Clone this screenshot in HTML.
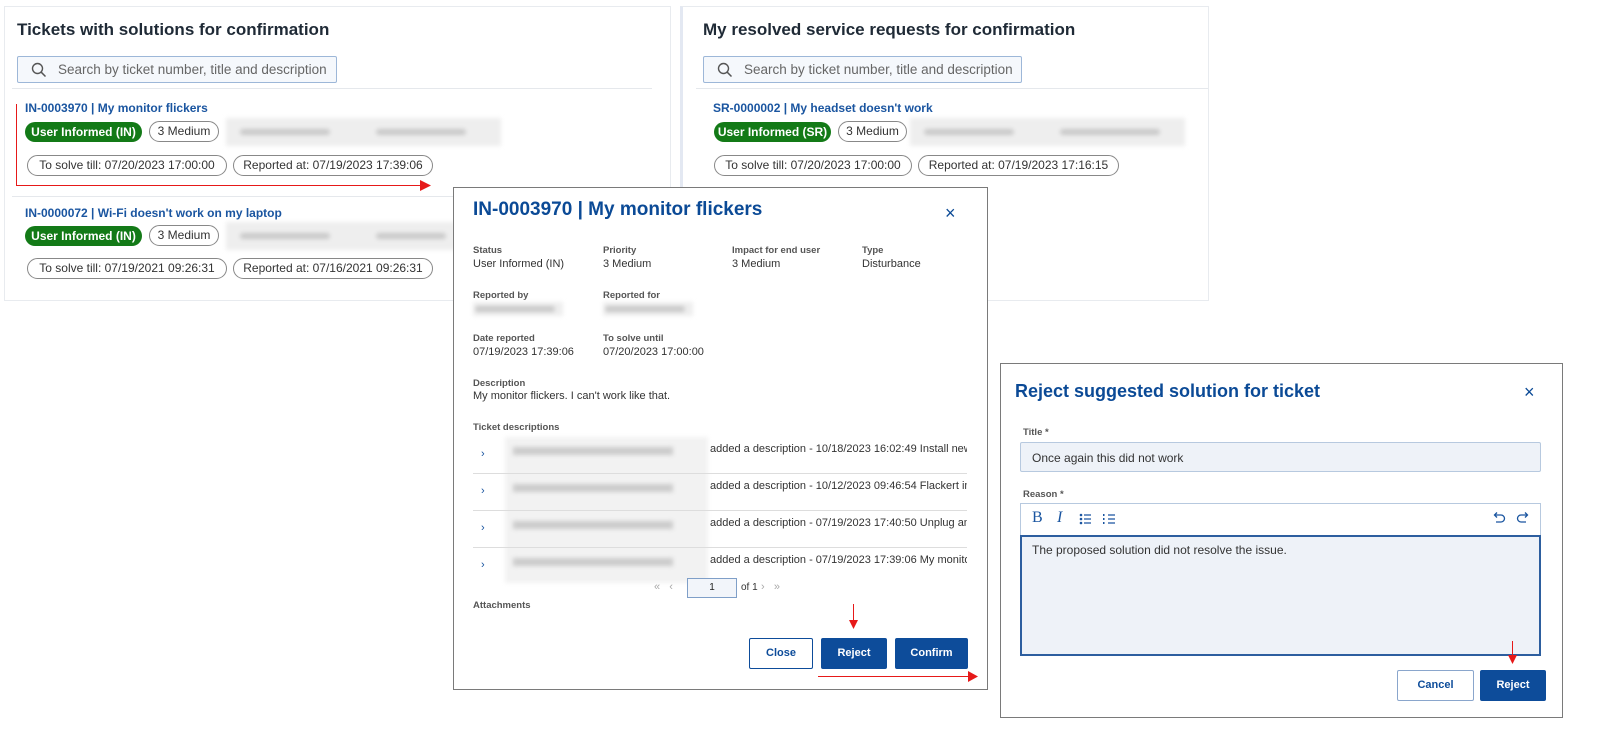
<!DOCTYPE html>
<html><head><meta charset="utf-8"><style>
*{box-sizing:border-box;margin:0;padding:0}
body{width:1600px;height:742px;background:#fff;position:relative;overflow:hidden;font-family:"Liberation Sans",sans-serif;color:#222}
.a{position:absolute;white-space:nowrap}
.card{position:absolute;border:1px solid #e8ebef;background:#fff}
.h{font-size:17px;font-weight:bold;color:#1f2a36}
.search{position:absolute;height:27px;border:1px solid #9db7d8;background:#f5f8fc;border-radius:2px;font-size:13.5px;color:#666;padding:5px 0 0 40px}
.search svg{position:absolute;left:13px;top:5px}
.tl{font-size:12px;font-weight:bold;color:#1a55a0}
.g{position:absolute;height:20px;border-radius:10px;background:#137a17;color:#fff;font-size:12px;font-weight:bold;line-height:20px;text-align:center}
.o{position:absolute;height:21px;border-radius:11px;border:1px solid #888;color:#333;font-size:12px;line-height:19px;text-align:center;background:#fff}
.blur{position:absolute;background:#eee;filter:blur(2px)}
.blur i{position:absolute;height:6px;background:#c9c9c9;border-radius:3px;top:50%;margin-top:-3px}
.sep{position:absolute;height:1px;background:#e5e8ec}
.modal{position:absolute;border:1px solid #7a7a7a;background:#fff}
.lab{font-size:9.5px;font-weight:bold;color:#555}
.val{font-size:11px;color:#333}
.btn{position:absolute;height:31px;border-radius:2px;font-size:11px;font-weight:bold;text-align:center;line-height:29px}
.pri{background:#0d4c9a;color:#fff;border:1px solid #0d4c9a}
.sec{background:#fff;color:#0d4c9a;border:1px solid #0d4c9a}
.red{position:absolute;background:#e61919}
</style></head><body>

<!-- left card -->
<div class="card" style="left:4px;top:6px;width:667px;height:295px"></div>
<div class="a h" style="left:17px;top:20px">Tickets with solutions for confirmation</div>
<div class="search" style="left:17px;top:56px;width:320px"><svg width="16" height="16" viewBox="0 0 16 16"><circle cx="6.5" cy="6.5" r="5" fill="none" stroke="#555" stroke-width="1.4"/><path d="M10.2 10.2L14.5 14.5" stroke="#555" stroke-width="1.5"/></svg>Search by ticket number, title and description</div>
<div class="sep" style="left:12px;top:88px;width:640px"></div>
<div class="a tl" style="left:25px;top:101px">IN-0003970 | My monitor flickers</div>
<div class="g" style="left:25px;top:122px;width:117px">User Informed (IN)</div>
<div class="o" style="left:149px;top:121px;width:70px">3 Medium</div>
<div class="blur" style="left:226px;top:118px;width:275px;height:28px"><i style="left:14px;width:90px"></i><i style="left:150px;width:90px"></i></div>
<div class="o" style="left:27px;top:155px;width:200px">To solve till: 07/20/2023 17:00:00</div>
<div class="o" style="left:233px;top:155px;width:200px">Reported at: 07/19/2023 17:39:06</div>
<div class="sep" style="left:12px;top:196px;width:640px"></div>
<div class="a tl" style="left:25px;top:206px">IN-0000072 | Wi-Fi doesn't work on my laptop</div>
<div class="g" style="left:25px;top:226px;width:117px">User Informed (IN)</div>
<div class="o" style="left:149px;top:225px;width:70px">3 Medium</div>
<div class="blur" style="left:226px;top:222px;width:230px;height:28px"><i style="left:14px;width:90px"></i><i style="left:150px;width:70px"></i></div>
<div class="o" style="left:27px;top:258px;width:200px">To solve till: 07/19/2021 09:26:31</div>
<div class="o" style="left:233px;top:258px;width:200px">Reported at: 07/16/2021 09:26:31</div>
<div class="red" style="left:16px;top:104px;width:1px;height:82px"></div>
<div class="red" style="left:16px;top:185px;width:406px;height:1px"></div>
<svg class="a" style="left:420px;top:180px" width="12" height="11"><path d="M0 0L11 5.5L0 11Z" fill="#e61919"/></svg>

<!-- right card -->
<div class="card" style="left:680px;top:6px;width:529px;height:295px;border-left:3px solid #e3e8f2"></div>
<div class="a h" style="left:703px;top:20px">My resolved service requests for confirmation</div>
<div class="search" style="left:703px;top:56px;width:319px"><svg width="16" height="16" viewBox="0 0 16 16"><circle cx="6.5" cy="6.5" r="5" fill="none" stroke="#555" stroke-width="1.4"/><path d="M10.2 10.2L14.5 14.5" stroke="#555" stroke-width="1.5"/></svg>Search by ticket number, title and description</div>
<div class="sep" style="left:696px;top:88px;width:512px"></div>
<div class="a tl" style="left:713px;top:101px">SR-0000002 | My headset doesn't work</div>
<div class="g" style="left:714px;top:122px;width:117px">User Informed (SR)</div>
<div class="o" style="left:838px;top:121px;width:69px">3 Medium</div>
<div class="blur" style="left:910px;top:118px;width:275px;height:28px"><i style="left:14px;width:90px"></i><i style="left:150px;width:100px"></i></div>
<div class="o" style="left:714px;top:155px;width:198px">To solve till: 07/20/2023 17:00:00</div>
<div class="o" style="left:918px;top:155px;width:201px">Reported at: 07/19/2023 17:16:15</div>

<!-- modal 1 -->
<div class="modal" style="left:453px;top:187px;width:535px;height:503px"></div>
<div class="a" style="left:473px;top:199px;font-size:19px;font-weight:bold;color:#0b4a96">IN-0003970 | My monitor flickers</div>
<div class="a" style="left:945px;top:203px;font-size:18px;color:#0b4a96">×</div>
<div class="a lab" style="left:473px;top:245px">Status</div><div class="a val" style="left:473px;top:258px">User Informed (IN)</div>
<div class="a lab" style="left:603px;top:245px">Priority</div><div class="a val" style="left:603px;top:258px">3 Medium</div>
<div class="a lab" style="left:732px;top:245px">Impact for end user</div><div class="a val" style="left:732px;top:258px">3 Medium</div>
<div class="a lab" style="left:862px;top:245px">Type</div><div class="a val" style="left:862px;top:258px">Disturbance</div>
<div class="a lab" style="left:473px;top:290px">Reported by</div>
<div class="blur" style="left:473px;top:302px;width:90px;height:14px"><i style="left:2px;width:80px"></i></div>
<div class="a lab" style="left:603px;top:290px">Reported for</div>
<div class="blur" style="left:603px;top:302px;width:90px;height:14px"><i style="left:2px;width:80px"></i></div>
<div class="a lab" style="left:473px;top:333px">Date reported</div><div class="a val" style="left:473px;top:346px">07/19/2023 17:39:06</div>
<div class="a lab" style="left:603px;top:333px">To solve until</div><div class="a val" style="left:603px;top:346px">07/20/2023 17:00:00</div>
<div class="a lab" style="left:473px;top:378px">Description</div><div class="a val" style="left:473px;top:390px">My monitor flickers. I can't work like that.</div>
<div class="a lab" style="left:473px;top:422px">Ticket descriptions</div>
<div class="a" style="left:505px;top:437px;width:203px;height:146px;background:#f2f2f2;filter:blur(2px)"></div>
<div style="position:absolute;left:473px;top:437px;width:494px;height:150px;overflow:hidden">
 <div class="a" style="left:0;top:0;width:494px;height:37px;border-bottom:1px solid #ddd"><span class="a" style="left:8px;top:11px;font-size:11px;color:#1a55a0">›</span><i class="blur" style="left:40px;top:10px;width:160px;height:8px;background:#ccc"></i><span class="a val" style="left:237px;top:6px">added a description - 10/18/2023 16:02:49 Install new</span></div>
 <div class="a" style="left:0;top:37px;width:494px;height:37px;border-bottom:1px solid #ddd"><span class="a" style="left:8px;top:11px;font-size:11px;color:#1a55a0">›</span><i class="blur" style="left:40px;top:10px;width:160px;height:8px;background:#ccc"></i><span class="a val" style="left:237px;top:6px">added a description - 10/12/2023 09:46:54 Flackert im</span></div>
 <div class="a" style="left:0;top:74px;width:494px;height:37px;border-bottom:1px solid #ddd"><span class="a" style="left:8px;top:11px;font-size:11px;color:#1a55a0">›</span><i class="blur" style="left:40px;top:10px;width:160px;height:8px;background:#ccc"></i><span class="a val" style="left:237px;top:6px">added a description - 07/19/2023 17:40:50 Unplug and</span></div>
 <div class="a" style="left:0;top:111px;width:494px;height:37px"><span class="a" style="left:8px;top:11px;font-size:11px;color:#1a55a0">›</span><i class="blur" style="left:40px;top:10px;width:160px;height:8px;background:#ccc"></i><span class="a val" style="left:237px;top:6px">added a description - 07/19/2023 17:39:06 My monitor</span></div>
</div>
<div class="a" style="left:654px;top:581px;font-size:11px;color:#aaa">«&nbsp;&nbsp;&nbsp;‹</div>
<div class="a" style="left:687px;top:578px;width:50px;height:20px;border:1px solid #7f9fc8;background:#f2f5fa;font-size:10px;text-align:center;line-height:18px">1</div>
<div class="a val" style="left:741px;top:582px;font-size:10px">of 1</div>
<div class="a" style="left:761px;top:581px;font-size:11px;color:#aaa">›&nbsp;&nbsp;&nbsp;»</div>
<div class="a lab" style="left:473px;top:600px">Attachments</div>
<div class="btn sec" style="left:749px;top:638px;width:64px">Close</div>
<div class="btn pri" style="left:821px;top:638px;width:66px">Reject</div>
<div class="btn pri" style="left:895px;top:638px;width:73px">Confirm</div>
<div class="red" style="left:853px;top:604px;width:1px;height:18px"></div>
<svg class="a" style="left:849px;top:620px" width="9" height="10"><path d="M0 0L9 0L4.5 9Z" fill="#e61919"/></svg>
<div class="red" style="left:818px;top:676px;width:152px;height:1px"></div>
<svg class="a" style="left:968px;top:671px" width="11" height="11"><path d="M0 0L10 5.5L0 11Z" fill="#e61919"/></svg>

<!-- modal 2 -->
<div class="modal" style="left:1000px;top:363px;width:563px;height:355px"></div>
<div class="a" style="left:1015px;top:381px;font-size:18px;font-weight:bold;color:#0b4a96">Reject suggested solution for ticket</div>
<div class="a" style="left:1524px;top:382px;font-size:18px;color:#0b4a96">×</div>
<div class="a lab" style="left:1023px;top:427px">Title *</div>
<div class="a" style="left:1020px;top:442px;width:521px;height:30px;background:#eef2f8;border:1px solid #b7c9df;border-radius:2px;font-size:12px;padding:8px 0 0 11px;color:#333">Once again this did not work</div>
<div class="a lab" style="left:1023px;top:489px">Reason *</div>
<div class="a" style="left:1020px;top:503px;width:521px;height:33px;background:#fff;border:1px solid #b7c9df;border-bottom:none"></div>
<div class="a" style="left:1032px;top:509px;font-size:16px;color:#1a55a0;font-family:'Liberation Serif',serif">B</div>
<div class="a" style="left:1057px;top:509px;font-size:16px;color:#1a55a0;font-family:'Liberation Serif',serif;font-style:italic">I</div>
<svg class="a" style="left:1079px;top:513px" width="40" height="12"><g fill="#1a55a0"><circle cx="2" cy="2" r="1.3"/><circle cx="2" cy="6" r="1.3"/><circle cx="2" cy="10" r="1.3"/></g><g stroke="#1a55a0" stroke-width="1.2"><path d="M5 2H12M5 6H12M5 10H12M29 2H36M29 6H36M29 10H36"/></g><g fill="#1a55a0"><rect x="24" y="1" width="1.5" height="2"/><rect x="24" y="5" width="1.5" height="2"/><rect x="24" y="9" width="1.5" height="2"/></g></svg>
<svg class="a" style="left:1492px;top:512px" width="38" height="12"><g fill="none" stroke="#1a55a0" stroke-width="1.3"><path d="M3 3H9A3.5 3.5 0 0 1 9 10H4M5 0.5L2.5 3L5 5.5"/><path d="M35 3H29A3.5 3.5 0 0 0 29 10H34M33 0.5L35.5 3L33 5.5"/></g></svg>
<div class="a" style="left:1020px;top:535px;width:521px;height:121px;background:#eef2f8;border:2px solid #2d5e9f;font-size:12px;color:#333;padding:6px 0 0 10px">The proposed solution did not resolve the issue.</div>
<div class="btn sec" style="left:1397px;top:670px;width:77px;border-color:#8aa6cc">Cancel</div>
<div class="btn pri" style="left:1480px;top:670px;width:66px">Reject</div>
<div class="red" style="left:1512px;top:641px;width:1px;height:16px"></div>
<svg class="a" style="left:1508px;top:655px" width="9" height="10"><path d="M0 0L9 0L4.5 9Z" fill="#e61919"/></svg>
</body></html>
